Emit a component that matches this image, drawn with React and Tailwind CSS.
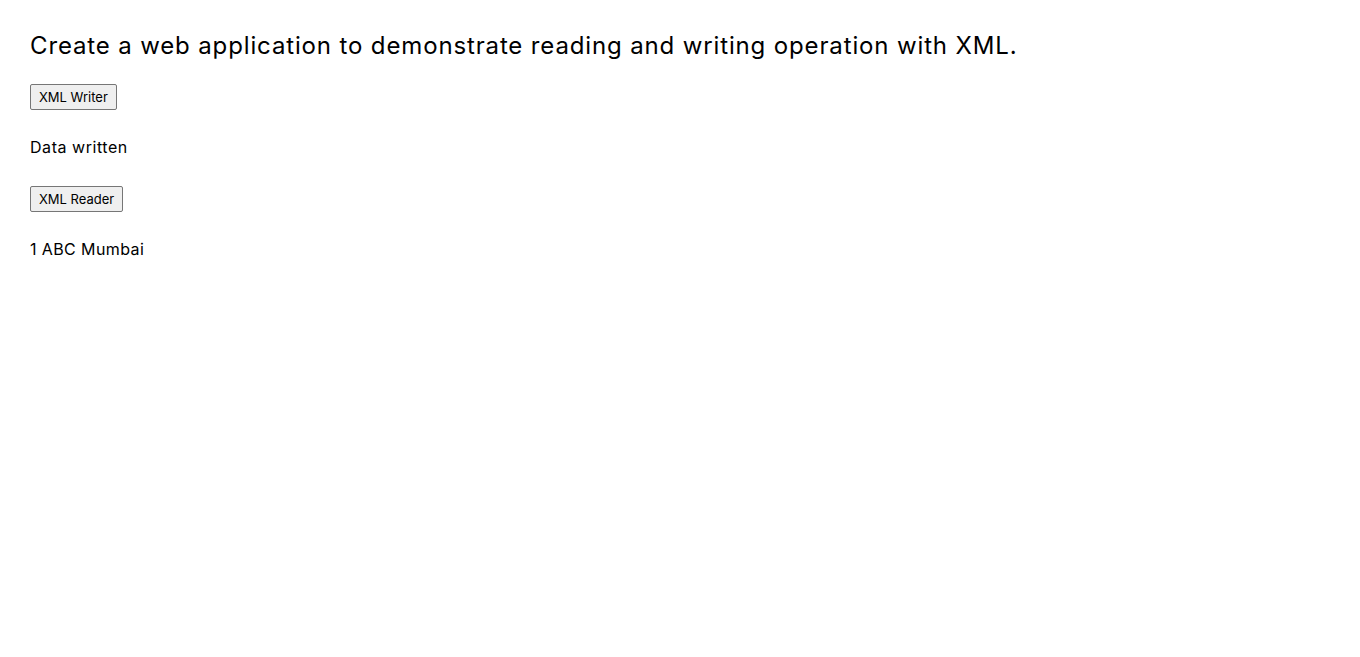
export default function App() {
  return (
    <div className="min-h-screen bg-white px-[30px] pt-[28px] text-black font-['Inter',sans-serif]">
      <h2 className="text-[24px] leading-[36px] font-normal tracking-[0.86px]">
        Create a web application to demonstrate reading and writing operation with XML.
      </h2>
      <div className="mt-[20px]">
        <button className="h-[26px] rounded-[2px] border border-[#767676] bg-[#efefef] px-[8px] text-[13px] leading-[24px]">
          XML Writer
        </button>
      </div>
      <p className="mt-[25px] text-[16px] leading-[24px] tracking-[0.55px]">Data written</p>
      <div className="mt-[27px]">
        <button className="h-[26px] rounded-[2px] border border-[#767676] bg-[#efefef] px-[8px] text-[13px] leading-[24px]">
          XML Reader
        </button>
      </div>
      <p className="mt-[25px] text-[16px] leading-[24px] tracking-[0.4px]">1 ABC Mumbai</p>
    </div>
  );
}
